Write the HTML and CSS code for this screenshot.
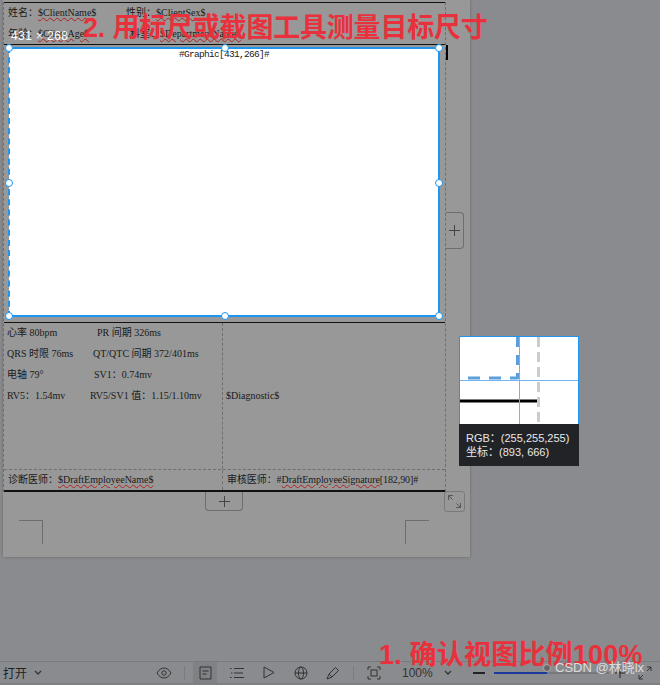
FILE: index.html
```html
<!DOCTYPE html>
<html lang="zh-CN">
<head>
<meta charset="UTF-8">
<title>报告模板</title>
<link rel="stylesheet" href="styles.css">
</head>
<body>

<div class="stage">
  <div class="paper">
    <!-- 模板表格 -->
    <div class="sheet">
      <div class="head">
        <div class="head-row"><span class="head-a">姓名：<u>$ClientName$</u></span><span>性别：<u>$ClientSex$</u></span></div>
        <div class="head-row"><span class="head-a head-b">年龄：<u>$ClientAge$</u></span><span>科室：<u>$DepartmentName$</u></span></div>
      </div>
      <div class="graphic-row">
        <div class="graphic">#Graphic[431,266]#</div>
      </div>
      <div class="info">
        <div class="info-left">
          <div class="line"><span class="first">心率 80bpm</span><span class="second s97">PR 间期 326ms</span></div>
          <div class="line"><span class="first">QRS 时限 76ms</span><span class="second s93">QT/QTC 间期 372/401ms</span></div>
          <div class="line"><span class="first">电轴 79°</span><span class="second s94">SV1：0.74mv</span></div>
          <div class="line"><span class="first">RV5：1.54mv</span><span class="second s90">RV5/SV1 值：1.15/1.10mv</span></div>
        </div>
        <div class="info-right">$Diagnostic$</div>
      </div>
      <div class="sign">
        <div class="sign-left">诊断医师：<u>$DraftEmployeeName$</u></div>
        <div class="sign-right">审核医师：#<u>DraftEmployeeSignature</u>[182,90]#</div>
      </div>
    </div>

    <div class="size-label">431 × 268</div>
    <div class="caret"></div>

    <!-- 选中框 -->
    <div class="selection">
      <i class="dot tl"></i><i class="dot tc"></i><i class="dot tr"></i>
      <i class="dot ml"></i><i class="dot mr"></i>
      <i class="dot bl"></i><i class="dot bc"></i><i class="dot br"></i>
    </div>

    <div class="add add-side"><svg width="11" height="11" viewBox="0 0 11 11"><path d="M5.5 0v11M0 5.5h11" stroke="#444" fill="none"/></svg></div>
    <div class="add add-bottom"><svg width="11" height="11" viewBox="0 0 11 11"><path d="M5.5 0v11M0 5.5h11" stroke="#444" fill="none"/></svg></div>
    <div class="expand"><svg width="15" height="15" viewBox="0 0 15 15"><path d="M1.5 6V1.500H6M1.500 1.500l4 4M13.500 9v4.500H9M13.500 13.500l-4-4" stroke="#555" fill="none"/></svg></div>
    <div class="crop crop-l"></div>
    <div class="crop crop-r"></div>
  </div>

  <!-- 放大镜 -->
  <div class="loupe">
    <svg class="loupe-view" width="118" height="87" viewBox="0 0 118 87">
      <path d="M8 41h50" stroke="#5b9fdc" stroke-width="3" stroke-dasharray="12 9" fill="none"/>
      <path d="M57.500 0v42" stroke="#5b9fdc" stroke-width="3" stroke-dasharray="10 8" fill="none"/>
      <path d="M0 64h77" stroke="#000" stroke-width="3" fill="none"/>
      <path d="M78.500 0v85" stroke="#ccc" stroke-width="3" stroke-dasharray="10 5" fill="none"/>
      <path d="M59.500 0v87M0 43.500h118" stroke="#6db5f5" fill="none"/>
    </svg>
    <div class="loupe-info">
      <div>RGB：(255,255,255)</div>
      <div>坐标：(893, 666)</div>
    </div>
  </div>

  <div class="note note-top">2. 用标尺或截图工具测量目标尺寸</div>
  <div class="note note-bottom">1. 确认视图比例100%</div>
  <div class="mark"><i class="mark-dot"></i>CSDN @林晓lx</div>
</div>

<!-- 底部工具栏 -->
<div class="toolbar">
  <span class="open">打开</span>
  <svg class="open-caret" width="8" height="5" viewBox="0 0 8 5"><path d="M1 1l3 3 3-3" stroke="#333" stroke-width="1.300" fill="none"/></svg>
  <div class="tools">
    <span class="tool"><svg width="16" height="12" viewBox="0 0 16 12"><path d="M1 6c2-3.500 4.500-5 7-5s5 1.500 7 5c-2 3.500-4.500 5-7 5s-5-1.500-7-5z" stroke="#333" fill="none"/><circle cx="8" cy="6" r="2.200" stroke="#333" fill="none"/></svg></span>
    <span class="sep"></span>
    <span class="tool tool-on"><svg width="13" height="14" viewBox="0 0 13 14"><path d="M1 1h11v12H1zM3.500 5h6M3.500 8h4" stroke="#333" fill="none"/></svg></span>
    <span class="tool"><svg width="14" height="12" viewBox="0 0 14 12"><path d="M0 1.500h1.500M4 1.500h10M1 6h1.500M4 6h9M0 10.500h1.500M4 10.500h10" stroke="#333" fill="none"/></svg></span>
    <span class="tool"><svg width="12" height="13" viewBox="0 0 12 13"><path d="M1 1l10 5.500L1 12z" stroke="#333" fill="none"/></svg></span>
    <span class="tool"><svg width="14" height="14" viewBox="0 0 14 14"><circle cx="7" cy="7" r="6" stroke="#333" fill="none"/><ellipse cx="7" cy="7" rx="2.500" ry="6" stroke="#333" fill="none"/><path d="M1 7h12" stroke="#333" fill="none"/></svg></span>
    <span class="tool"><svg width="14" height="14" viewBox="0 0 14 14"><path d="M9.500 1.500l3 3-6.500 6.500-3-3zM3 8l-2 5 5-2" stroke="#333" fill="none"/></svg></span>
    <span class="sep"></span>
    <span class="tool"><svg width="14" height="14" viewBox="0 0 14 14"><path d="M1 4V1h3M10 1h3v3M13 10v3h-3M4 13H1v-3" stroke="#333" fill="none"/><rect x="4" y="4" width="6" height="6" stroke="#333" fill="none"/></svg></span>
  </div>
  <span class="zoom-val">100%</span>
  <svg class="zoom-caret" width="8" height="5" viewBox="0 0 8 5"><path d="M1 1l3 3 3-3" stroke="#333" stroke-width="1.300" fill="none"/></svg>
  <span class="minus"></span>
  <div class="slider"><span class="slider-fill"></span><span class="slider-rest"></span></div>
  <svg class="plus" width="10" height="10" viewBox="0 0 10 10"><path d="M5 0v10M0 5h10" stroke="#222" fill="none"/></svg>
  <svg class="full" width="14" height="14" viewBox="0 0 14 14"><path d="M9 1h4v4M13 1L9 5M5 13H1V9M1 13l4-4" stroke="#333" fill="none"/></svg>
</div>
<div class="strip"></div>

</body>
</html>
```

FILE: styles.css
```css
/* 页面整体 */
body {
  margin: 0;
  width: 660px;
  height: 685px;
  overflow: hidden;
  background: #8a8b8e;
  font-family: "Liberation Serif", "Noto Sans CJK SC", serif;
  color: #1a1a1a;
}
.stage {
  position: relative;
  height: 661px;
}
.paper {
  position: relative;
  width: 467px;
  height: 557px;
  margin-left: 3px;
  padding-top: 2px;
  box-sizing: border-box;
  background: #989898;
  box-shadow: 0 0 3px rgba(0, 0, 0, 0.25);
}

/* 表格 */
.sheet {
  width: 441px;
  border-left: 1px dashed #6f6f6f;
  border-right: 1px dashed #6f6f6f;
  font-size: 10px;
}
u {
  text-decoration: underline wavy #b02020 1px;
  text-underline-offset: 1px;
}
.head {
  height: 43px;
  border-top: 1px solid #111;
  border-bottom: 1px solid #111;
  box-sizing: border-box;
  padding: 2px 0 0 4px;
}
.head-row {
  display: flex;
  height: 21px;
  line-height: 15px;
}
.head-a {
  width: 118px;
}
.head-b {
  width: 122px;
}
.graphic-row {
  height: 278px;
  padding: 3px 6px 0 5px;
  box-sizing: border-box;
  border-bottom: 1px solid #111;
}
.graphic {
  height: 268px;
  background: #fff;
  text-align: center;
  font-family: "Liberation Mono", "Noto Sans CJK SC", monospace;
  font-size: 9.500px;
  letter-spacing: -0.700px;
  line-height: 13px;
}
.info {
  display: flex;
  height: 147px;
  border-bottom: 1px dashed #6f6f6f;
  box-sizing: border-box;
}
.info-left {
  width: 219px;
  padding: 0 0 0 3px;
  border-right: 1px dashed #6f6f6f;
  box-sizing: border-box;
  flex: none;
}
.line {
  display: flex;
  height: 21px;
  line-height: 20px;
  white-space: nowrap;
}
.first {
  width: 0;
}
.s97 { margin-left: 90px; }
.s93 { margin-left: 86px; }
.s94 { margin-left: 87px; }
.s90 { margin-left: 83px; }
.info-right {
  padding: 63px 0 0 3px;
  line-height: 20px;
}
.sign {
  display: flex;
  height: 20px;
  line-height: 20px;
  border-bottom: 2px solid #111;
  white-space: nowrap;
}
.sign-left {
  width: 219px;
  padding-left: 4px;
  box-sizing: border-box;
  border-right: 1px dashed #6f6f6f;
}
.sign-right {
  padding-left: 4px;
  letter-spacing: -0.080px;
}

/* 浮在表格上的部分 */
.size-label {
  position: absolute;
  left: 8px;
  top: 29px;
  color: #fff;
  font: 12px "Liberation Sans", sans-serif;
  letter-spacing: 0.400px;
}
.caret {
  position: absolute;
  left: 443px;
  top: 45px;
  width: 2px;
  height: 15px;
  background: #000;
}
.selection {
  position: absolute;
  left: 5px;
  top: 47px;
  width: 428px;
  height: 266px;
  border: 2px solid #1c96f0;
  border-left-style: dashed;
}
.dot {
  position: absolute;
  width: 6px;
  height: 6px;
  border: 1.500px solid #1c96f0;
  border-radius: 50%;
  background: #fff;
  margin: -5.500px;
}
.tl { left: 0; top: 0; }
.tc { left: calc(50% + 2px); top: 0; }
.tr { left: calc(100% + 2px); top: 0; }
.ml { left: 0; top: calc(50% + 2px); }
.mr { left: calc(100% + 2px); top: calc(50% + 2px); }
.bl { left: 0; top: calc(100% + 2px); }
.bc { left: calc(50% + 2px); top: calc(100% + 2px); }
.br { left: calc(100% + 2px); top: calc(100% + 2px); }

.add {
  position: absolute;
  display: flex;
  align-items: center;
  justify-content: center;
  border: 1px solid #6e6e6e;
  box-sizing: border-box;
}
.add-side {
  left: 443px;
  top: 212px;
  width: 18px;
  height: 37px;
  border-left: 0;
  border-radius: 0 4px 4px 0;
}
.add-bottom {
  left: 202px;
  top: 492px;
  width: 38px;
  height: 19px;
  border-top: 0;
  border-radius: 0 0 4px 4px;
}
.expand {
  position: absolute;
  left: 441px;
  top: 491px;
  width: 21px;
  height: 21px;
  display: flex;
  align-items: center;
  justify-content: center;
  border: 1px solid #7a7a7a;
  border-radius: 3px;
  box-sizing: border-box;
}
.crop {
  position: absolute;
  top: 520px;
  width: 23px;
  height: 23px;
  border-top: 1px solid #6e6e6e;
}
.crop-l {
  left: 16px;
  border-right: 1px solid #6e6e6e;
}
.crop-r {
  left: 402px;
  border-left: 1px solid #6e6e6e;
}

/* 放大镜 */
.loupe {
  position: absolute;
  left: 459px;
  top: 336px;
  width: 120px;
  height: 130px;
  background: #fff;
  border: 1px solid #1c96f0;
  border-bottom: 0;
  box-sizing: border-box;
}
.loupe-view {
  display: block;
}
.loupe-info {
  height: 42px;
  margin: 0 -1px;
  padding: 7px 0 0 7px;
  box-sizing: border-box;
  background: #212327;
  color: #e8e8e8;
  font: 11px/14px "Liberation Sans", "Noto Sans CJK SC", sans-serif;
}

/* 标注文字 */
.note {
  position: absolute;
  color: #e8313c;
  font-family: "Liberation Sans", "Noto Sans CJK SC", sans-serif;
  font-weight: 700;
  font-size: 27px;
  line-height: 30px;
  white-space: nowrap;
}
.note-top {
  left: 83px;
  top: 13px;
  letter-spacing: -0.200px;
}
.note-bottom {
  left: 379px;
  top: 640px;
  letter-spacing: 0.200px;
}
.mark {
  position: absolute;
  left: 543px;
  top: 660px;
  display: flex;
  align-items: center;
  color: #dcdcdc;
  font: 13px/16px "Liberation Sans", "Noto Sans CJK SC", sans-serif;
  white-space: nowrap;
  z-index: 2;
}
.mark-dot {
  width: 6px;
  height: 6px;
  margin-right: 4px;
  border: 1px solid #aaa;
  border-radius: 50%;
  background: #666;
}

/* 工具栏 */
.toolbar {
  display: flex;
  align-items: center;
  height: 21px;
  border-top: 1px solid #7a7b7e;
  background: #8a8b8e;
  color: #222;
  font-family: "Liberation Sans", "Noto Sans CJK SC", sans-serif;
  font-size: 12px;
}
.open {
  margin-left: 3px;
  width: 30px;
}
.open-caret {
  margin-left: 1px;
}
.tools {
  display: flex;
  align-items: center;
  margin-left: 110px;
}
.tool {
  display: flex;
  align-items: center;
  justify-content: center;
  width: 24px;
  height: 21px;
  margin-right: 8px;
}
.tool:last-child {
  margin-right: 0;
}
.tool-on {
  background: #808184;
}
.sep {
  width: 1px;
  height: 14px;
  background: #7a7b7e;
  margin: 0 8px 0 0;
}
.zoom-val {
  margin-left: 16px;
  width: 30px;
  color: #333;
}
.zoom-caret {
  margin-left: 12px;
}
.minus {
  width: 12px;
  height: 2px;
  margin-left: 21px;
  background: #222;
}
.slider {
  display: flex;
  align-items: center;
  width: 115px;
  margin-left: 9px;
}
.slider-fill {
  width: 53px;
  height: 2px;
  background: #1c3a9c;
}
.slider-rest {
  width: 62px;
  height: 2px;
  background: #77787b;
}
.plus {
  margin-left: 6px;
}
.full {
  margin-left: 13px;
}
.strip {
  height: 3px;
  background: #7f8085;
}
```
